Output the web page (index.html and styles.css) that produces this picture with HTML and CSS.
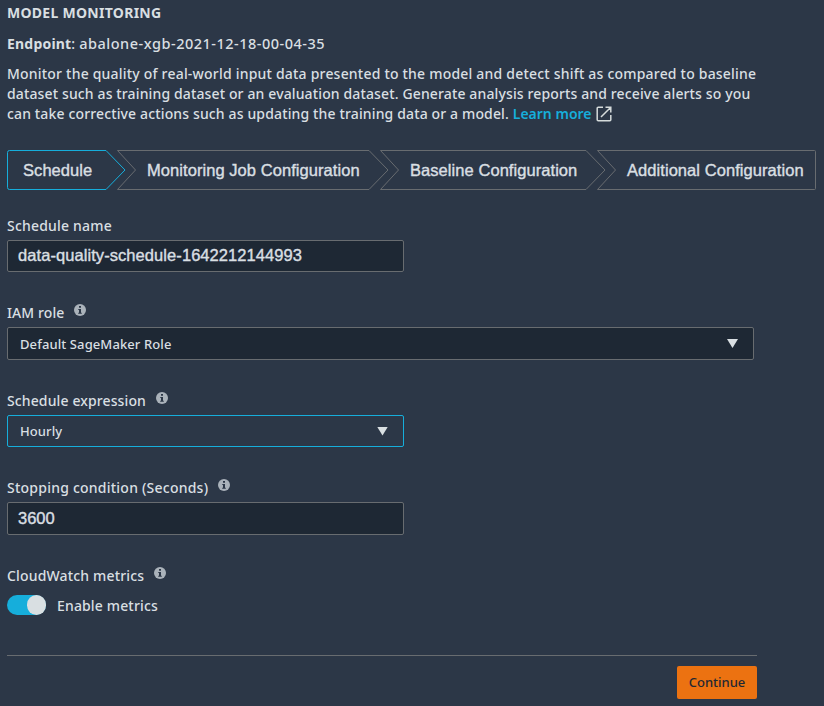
FILE: index.html
```html
<!DOCTYPE html>
<html lang="en">
<head>
<meta charset="utf-8">
<title>Model monitoring</title>
<link rel="stylesheet" href="styles.css">
</head>
<body>
<svg class="sprite" aria-hidden="true">
  <symbol id="info" viewBox="0 0 12 12">
    <circle cx="6" cy="6" r="6" fill="#aab2ba"/>
    <path d="M5 2h2v1.7H5zM4.3 5H7v3.7h.8v1H4.2v-1H5V6h-.7z" fill="#2c3747"/>
  </symbol>
</svg>
<main class="page">
  <h1 class="title">MODEL MONITORING</h1>
  <p class="endpoint"><b>Endpoint</b>: <span class="endpoint-name">abalone-xgb-2021-12-18-00-04-35</span></p>
  <p class="intro">
    <span class="line line-1">Monitor the quality of real-world input data presented to the model and detect shift as compared to baseline</span>
    <span class="line line-2">dataset such as training dataset or an evaluation dataset. Generate analysis reports and receive alerts so you</span>
    <span class="line line-3">can take corrective actions such as updating the training data or a model. <a class="link">Learn more</a><svg class="external" viewBox="0 0 16 16"><path d="M7 1.2H2.2a1 1 0 0 0-1 1v11.6a1 1 0 0 0 1 1h11.6a1 1 0 0 0 1-1V9M9.5 1.2h5.3v5.3M14.3 1.7 5 11" fill="none" stroke="#d5dbdb" stroke-width="1.5"/></svg></span>
  </p>
  <nav class="steps">
    <div class="step step-schedule"><svg class="outline" viewBox="0 0 119 40"><path d="M2.5.5H99L118 20 99 39.500H2.500Q.5 39.500.5 37.500V2.500Q.5.5 2.500.5Z"/></svg><span>Schedule</span></div>
    <div class="step step-job"><svg class="outline" viewBox="0 0 272 40"><path d="M.5.5H252L271 20 252 39.500H.5L18.500 20Z"/></svg><span>Monitoring Job Configuration</span></div>
    <div class="step step-baseline"><svg class="outline" viewBox="0 0 226 40"><path d="M.5.5H206L225 20 206 39.500H.5L18.500 20Z"/></svg><span>Baseline Configuration</span></div>
    <div class="step step-additional"><svg class="outline" viewBox="0 0 219 40"><path d="M.5.5H217.500Q218.500.5 218.500 1.500V38.500Q218.500 39.500 217.500 39.500H.5L18.500 20Z"/></svg><span>Additional Configuration</span></div>
  </nav>
  <section class="field">
    <div class="label"><span class="name-label">Schedule name</span></div>
    <div class="box input short"><span class="name-value">data-quality-schedule-1642212144993</span></div>
  </section>
  <section class="field tall">
    <div class="label"><span class="role-label">IAM role</span><svg class="info"><use href="#info"/></svg></div>
    <div class="box select wide"><span class="role-value">Default SageMaker Role</span><i class="arrow"></i></div>
  </section>
  <section class="field">
    <div class="label"><span class="expression-label">Schedule expression</span><svg class="info"><use href="#info"/></svg></div>
    <div class="box select short focused"><span class="hourly-value">Hourly</span><i class="arrow"></i></div>
  </section>
  <section class="field tall">
    <div class="label"><span class="stopping-label">Stopping condition (Seconds)</span><svg class="info"><use href="#info"/></svg></div>
    <div class="box input"><span>3600</span></div>
  </section>
  <section class="metrics">
    <div class="label"><span class="metrics-label">CloudWatch metrics</span><svg class="info"><use href="#info"/></svg></div>
    <div class="toggle-row"><span class="toggle"><i class="knob"></i></span><span class="enable-label">Enable metrics</span></div>
  </section>
  <footer class="footer"><button class="continue">Continue</button></footer>
</main>
</body>
</html>
```

FILE: styles.css
```css
* { box-sizing: border-box; }
body {
  margin: 0;
  height: 706px;
  overflow: hidden;
  background: #2c3747;
  color: #d9dfe2;
  font: 500 14px/20px "Noto Sans", "Open Sans", sans-serif;
}
.sprite { display: none; }
.page { padding: 3px 8px 0 7px; }
.title { margin: 0; font-size: 14px; line-height: 20px; font-weight: 700; letter-spacing: .28px; }
.endpoint { margin: 10px 0; letter-spacing: .2px; }
.endpoint-name { font-size: 14.5px; letter-spacing: .5px; }
.intro { margin: 0; white-space: nowrap; }
.line { display: block; height: 20px; }
.line-1 { letter-spacing: .205px; }
.line-2 { letter-spacing: .132px; }
.line-3 { letter-spacing: .14px; }
.link { color: #16aedb; font-weight: 600; letter-spacing: 0; }
.external { width: 16px; height: 16px; margin-left: 4px; vertical-align: -3px; }
.steps {
  display: flex;
  width: 809px;
  height: 40px;
  margin-top: 26px;
  font: 16.5px/40px "Liberation Sans", Arial, sans-serif;
  letter-spacing: .06px;
  -webkit-text-stroke: .4px;
}
.step { display: grid; flex: none; white-space: nowrap; }
.step > * { grid-area: 1 / 1; }
.outline { width: 100%; height: 40px; }
.outline path { fill: none; stroke: #686c70; stroke-width: 1; }
.step-schedule { width: 119px; }
.step-schedule .outline path { stroke: #16aedb; }
.step-job { width: 272px; margin-left: -9px; }
.step-baseline { width: 226px; margin-left: -9px; }
.step-additional { width: 219px; margin-left: -9px; }
.step-schedule span { padding-left: 16px; }
.step-job span, .step-baseline span, .step-additional span { padding-left: 30px; }
.field { height: 87px; }
.field.tall { height: 88px; }
.steps + .field { margin-top: 26px; }
.label { display: flex; height: 24px; line-height: 20px; white-space: nowrap; }
.name-label { letter-spacing: .2px; }
.role-label { letter-spacing: .1px; }
.expression-label { letter-spacing: .12px; }
.stopping-label { letter-spacing: .23px; }
.metrics-label { letter-spacing: .17px; }
.info { width: 12px; height: 12px; margin: 1px 0 0 10px; }
.box {
  display: flex;
  align-items: center;
  width: 397px;
  height: 33px;
  border: 1px solid #686c70;
  border-radius: 2px;
  background: #1e2834;
}
.input { padding-left: 10px; font: 16.5px "Liberation Sans", Arial, sans-serif; -webkit-text-stroke: .4px; }
.name-value { padding-bottom: 2px; letter-spacing: .07px; }
.select { justify-content: space-between; padding: 0 15px 0 12px; font-size: 13px; letter-spacing: .1px; }
.short { height: 32px; }
.wide { width: 747px; }
.focused { border-color: #16aedb; background: #2c3747; }
.arrow { width: 11px; height: 9px; background: #d9dfe2; clip-path: polygon(0 0, 100% 0, 50% 100%); }
.toggle-row { display: flex; align-items: center; height: 20px; margin-top: 5px; gap: 11px; }
.toggle { display: flex; justify-content: flex-end; width: 39px; height: 20px; border-radius: 10px; background: #16aedb; }
.knob { width: 19px; height: 20px; border-radius: 10px; background: #d9dfe2; }
.enable-label { padding-top: 1px; letter-spacing: .15px; }
.footer { display: flex; justify-content: flex-end; width: 750px; margin-top: 40px; padding-top: 10px; border-top: 1px solid #686c70; }
.continue { width: 80px; height: 33px; padding: 0 0 1px; border: 0; border-radius: 2px; background: #ec7211; color: #1f2833; font: 500 13px "Noto Sans", sans-serif; }
```
